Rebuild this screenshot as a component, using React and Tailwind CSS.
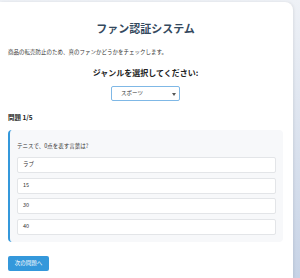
import React, { useState } from "react";

const options = ["ラブ", "15", "30", "40"];

const App = () => {
  const [genre, setGenre] = useState("スポーツ");
  const [picked, setPicked] = useState(null);

  return (
    <div
      className="min-h-[278px] pt-[2px] pr-[7px] bg-[linear-gradient(180deg,#eef1f6_0%,#c7d3e6_100%)]"
      style={{ fontFamily: '"Noto Sans CJK JP", "Noto Sans", sans-serif' }}
    >
      {/* カード */}
      <div className="bg-white rounded-tr-[8px] shadow-[1px_0_3px_rgba(0,0,0,0.08)] pl-[8px] pr-[10px] pt-[19px] min-h-[276px]">
        <h1 className="text-center text-[11px] leading-[15px] font-bold text-[#34495e]">
          ファン認証システム
        </h1>
        <p className="mt-[12px] text-[5.5px] leading-[8px] text-[#333]">
          商品の転売防止のため、真のファンかどうかをチェックします。
        </p>

        <h2 className="mt-[11px] text-center text-[8px] leading-[11px] font-bold text-[#222]">
          ジャンルを選択してください:
        </h2>
        <div className="mt-[8px] flex justify-center">
          <div className="relative w-[69px] h-[15px] border border-[#7fb8e6] rounded-[2px] bg-white flex items-center pl-[9px]">
            <span className="text-[5.5px] leading-none text-[#333]">{genre}</span>
            <svg className="absolute right-[3px] top-[6px]" width="4" height="3" viewBox="0 0 4 3">
              <path d="M0 0 L4 0 L2 3 Z" fill="#555" />
            </svg>
            <select
              value={genre}
              onChange={(e) => setGenre(e.target.value)}
              className="absolute inset-0 opacity-0"
            >
              <option>スポーツ</option>
              <option>音楽</option>
              <option>アニメ</option>
            </select>
          </div>
        </div>

        <div className="mt-[12px] text-[6.5px] leading-[8px] font-semibold text-[#222]">問題 1/5</div>

        {/* 問題ボックス */}
        <div className="mt-[9px] bg-[#f7f8fa] border-l-[2px] border-[#3498db] rounded-[4px] pl-[7px] pr-[7px] pt-[12px] pb-[7.5px]">
          <p className="text-[5.5px] leading-[8px] text-[#333]">テニスで、0点を表す言葉は?</p>
          <div className="mt-[7px] flex flex-col gap-[4.5px]">
            {options.map((o, i) => (
              <button
                key={o}
                onClick={() => setPicked(i)}
                className={`h-[16px] w-full text-left pl-[5px] bg-white border rounded-[2px] text-[5.5px] leading-none text-[#333] ${
                  picked === i ? "border-[#3498db]" : "border-[#e3e5e8]"
                }`}
              >
                {o}
              </button>
            ))}
          </div>
        </div>

        <button className="mt-[14px] w-[41px] h-[15px] bg-[#3498db] rounded-[2px] text-white text-[5.5px] leading-none">
          次の問題へ
        </button>
      </div>
    </div>
  );
};

export default App;
